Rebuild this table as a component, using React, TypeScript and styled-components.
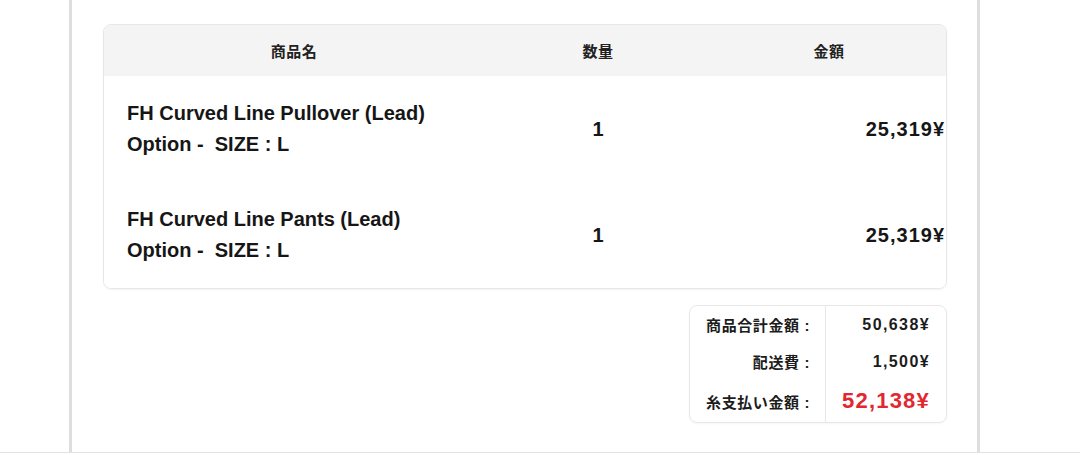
import React from "react";
import styled, { createGlobalStyle } from "styled-components";

const GlobalStyle = createGlobalStyle`
  html, body { margin: 0; padding: 0; background: #fff; }
  body {
    font-family: "Liberation Sans", "Noto Sans CJK JP", sans-serif;
    color: #1c1c1c;
    -webkit-font-smoothing: antialiased;
  }
`;

const Page = styled.div`
  width: 1080px;
  height: 455px;
  overflow: hidden;
  display: flex;
  flex-direction: column;
`;

const Stage = styled.div`
  display: flex;
  height: 453px;
  padding-left: 69px;
  box-sizing: border-box;
`;

const Panel = styled.section`
  width: 911px;
  box-sizing: border-box;
  border-left: 3px solid #dedede;
  border-right: 3px solid #dedede;
  padding: 24px 30px 0 31px;
  display: flex;
  flex-direction: column;
`;

const Footer = styled.div`
  height: 2px;
  border-top: 1px solid #e2e2e2;
`;

const Card = styled.div`
  border: 1px solid #e7e7e7;
  border-radius: 8px;
  overflow: hidden;
  box-shadow: 0 1px 2px rgba(0, 0, 0, 0.05);
`;

const Row = styled.div<{ $head?: boolean }>`
  display: grid;
  grid-template-columns: 380px 228px 1fr;
  align-items: center;
  height: ${(p) => (p.$head ? "51px" : "106px")};
  background: ${(p) => (p.$head ? "#f4f4f4" : "#fff")};
`;

const HeadCell = styled.div`
  text-align: center;
  font-size: 15px;
  font-weight: 700;
  letter-spacing: 0.5px;
  color: #222;
`;

const NameCell = styled.div`
  padding-left: 23px;
  font-size: 20px;
  font-weight: 700;
  line-height: 31px;
  color: #161616;
`;

const QtyCell = styled.div`
  text-align: center;
  font-size: 20px;
  font-weight: 700;
  color: #161616;
`;

const PriceCell = styled.div`
  text-align: right;
  padding-right: 1px;
  font-size: 20px;
  font-weight: 700;
  letter-spacing: 1px;
  color: #161616;
`;

const Summary = styled.div`
  align-self: flex-end;
  margin-top: 16px;
  width: 258px;
  height: 118px;
  box-sizing: border-box;
  border: 1px solid #e7e7e7;
  border-radius: 8px;
  display: grid;
  grid-template-columns: 135px 1fr;
  box-shadow: 0 1px 2px rgba(0, 0, 0, 0.04);
`;

const SumCol = styled.div<{ $right?: boolean }>`
  display: flex;
  flex-direction: column;
  justify-content: center;
  align-items: flex-end;
  padding-right: ${(p) => (p.$right ? "16px" : "15px")};
  border-left: ${(p) => (p.$right ? "1px solid #e7e7e7" : "none")};
`;

const SumLine = styled.div<{ $tall?: boolean }>`
  height: ${(p) => (p.$tall ? "42px" : "37px")};
  display: flex;
  align-items: center;
`;

const Label = styled.span`
  font-size: 15px;
  font-weight: 700;
  letter-spacing: 0.6px;
  color: #1c1c1c;
`;

const Value = styled.span<{ $total?: boolean }>`
  font-size: ${(p) => (p.$total ? "22px" : "16px")};
  font-weight: 700;
  letter-spacing: ${(p) => (p.$total ? "1.2px" : "1.4px")};
  color: ${(p) => (p.$total ? "#e3262f" : "#1c1c1c")};
`;

const items = [
  { name: "FH Curved Line Pullover (Lead)", qty: 1, price: "25,319¥" },
  { name: "FH Curved Line Pants (Lead)", qty: 1, price: "25,319¥" },
];

export default function App() {
  return (
    <>
      <GlobalStyle />
      <Page>
        <Stage>
          <Panel>
            <Card>
              <Row $head>
                <HeadCell>商品名</HeadCell>
                <HeadCell>数量</HeadCell>
                <HeadCell>金額</HeadCell>
              </Row>
              {items.map((it) => (
                <Row key={it.name}>
                  <NameCell>
                    <div>{it.name}</div>
                    <div>Option -&nbsp; SIZE : L</div>
                  </NameCell>
                  <QtyCell>{it.qty}</QtyCell>
                  <PriceCell>{it.price}</PriceCell>
                </Row>
              ))}
            </Card>
            <Summary>
              <SumCol>
                <SumLine><Label>商品合計金額 :</Label></SumLine>
                <SumLine><Label>配送費 :</Label></SumLine>
                <SumLine $tall><Label>糸支払い金額 :</Label></SumLine>
              </SumCol>
              <SumCol $right>
                <SumLine><Value>50,638¥</Value></SumLine>
                <SumLine><Value>1,500¥</Value></SumLine>
                <SumLine $tall><Value $total>52,138¥</Value></SumLine>
              </SumCol>
            </Summary>
          </Panel>
        </Stage>
        <Footer />
      </Page>
    </>
  );
}
